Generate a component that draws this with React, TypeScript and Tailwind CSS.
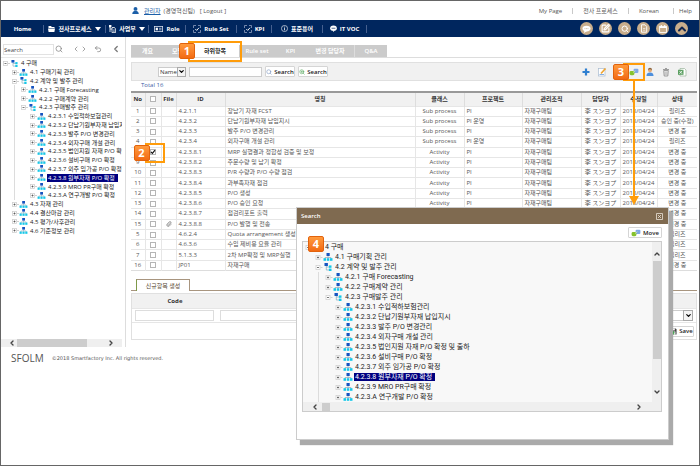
import React from "react";
import {
  ChevronDown,
  ChevronLeft,
  ChevronRight,
  ChevronUp,
  Paperclip,
  Search,
  SquarePen,
  Undo2,
  ZoomIn,
} from "lucide-react";

type Node = { level: number; label: string; kind: "org" | "open"; selected?: boolean };

const processTree: Node[] = [
  { level: 0, label: "4 구매", kind: "open" },
  { level: 1, label: "4.1 구매기획 관리", kind: "org" },
  { level: 1, label: "4.2 계약 및 발주 관리", kind: "open" },
  { level: 2, label: "4.2.1 구매 Forecasting", kind: "org" },
  { level: 2, label: "4.2.2 구매계약 관리", kind: "org" },
  { level: 2, label: "4.2.3 구매발주 관리", kind: "open" },
  { level: 3, label: "4.2.3.1 수입적하보험관리", kind: "org" },
  { level: 3, label: "4.2.3.2 단납기원부자재 납입지시", kind: "org" },
  { level: 3, label: "4.2.3.3 발주 P/O 변경관리", kind: "org" },
  { level: 3, label: "4.2.3.4 외자구매 개설 관리", kind: "org" },
  { level: 3, label: "4.2.3.5 법인지원 자재 P/O 확정 및 출하", kind: "org" },
  { level: 3, label: "4.2.3.6 설비구매 P/O 확정", kind: "org" },
  { level: 3, label: "4.2.3.7 외주 임가공 P/O 확정", kind: "org" },
  { level: 3, label: "4.2.3.8 원부자재 P/O 확정", kind: "org", selected: true },
  { level: 3, label: "4.2.3.9 MRO PR구매 확정", kind: "org" },
  { level: 3, label: "4.2.3.A 연구개발 P/O 확정", kind: "org" },
];

const sidebarTree: Node[] = [
  ...processTree,
  { level: 1, label: "4.3 자재 관리", kind: "org" },
  { level: 1, label: "4.4 결산마감 관리", kind: "org" },
  { level: 1, label: "4.5 평가/사후관리", kind: "org" },
  { level: 1, label: "4.6 기준정보 관리", kind: "org" },
];

const rows = [
  ["1", "4.2.1.1", "장납기 자재 FCST", "Sub process", "PI", "릴리즈"],
  ["2", "4.2.3.2", "단납기원부자재 납입지시", "Sub process", "PI 운영", "승인 중(수정)"],
  ["3", "4.2.3.3", "발주 P/O 변경관리", "Sub process", "PI", "변경 중"],
  ["4", "4.2.3.4", "외자구매 개설 관리", "Sub process", "PI 운영", "릴리즈"],
  ["8", "4.2.3.8.1", "MRP 실행결과 정합성 검증 및 보정", "Activity", "PI", "변경 중"],
  ["9", "4.2.3.8.2", "주문수량 및 납기 확정", "Activity", "PI", "변경 중"],
  ["10", "4.2.3.8.3", "P/R 수량과 P/O 수량 점검", "Activity", "PI", "변경 중"],
  ["11", "4.2.3.8.4", "과부족자재 점검", "Activity", "PI", "변경 중"],
  ["12", "4.2.3.8.5", "P/O 생성", "Activity", "PI", "변경 중"],
  ["13", "4.2.3.8.6", "P/O 승인 요청", "Activity", "PI", "변경 중"],
  ["14", "4.2.3.8.7", "점검리포트 출력", "Activity", "PI", "변경 중"],
  ["15", "4.2.3.8.8", "P/O 발행 및 전송", "Activity", "PI", "변경 중"],
  ["5", "4.6.2.4", "Quota arrangement 생성", "Activity", "PI", "릴리즈"],
  ["6", "4.6.3.6", "수입 제비용 요율 관리", "Activity", "PI", "릴리즈"],
  ["7", "5.1.3.3", "2차 MP확정 및 MRP실행", "Activity", "PI", "릴리즈"],
  ["16", "JP01", "자재구매", "Activity", "PI", "변경 중"],
];

function OrgIcon({ kind, className }: { kind: Node["kind"]; className: string }) {
  return kind === "org" ? (
    <svg viewBox="0 0 9 8" className={className}>
      <path d="M4.5 3v2M1.5 6V4.5h6V6" stroke="#9aa7b5" strokeWidth=".7" fill="none" />
      <rect x="3" y="0" width="3.2" height="3" fill="#1553c0" />
      <rect x="0" y="5.2" width="2.5" height="2.6" fill="#16c8e8" />
      <rect x="3.3" y="5.2" width="2.5" height="2.6" fill="#16c8e8" />
      <rect x="6.5" y="5.2" width="2.5" height="2.6" fill="#16c8e8" />
    </svg>
  ) : (
    <svg viewBox="0 0 9 8" className={className}>
      <path d="M2.8 3v4H6M2.8 4H6" stroke="#7fa8bd" strokeWidth=".7" fill="none" />
      <rect x="1" y="0" width="3.4" height="3" fill="#1553c0" />
      <rect x="5.4" y="2.4" width="2.6" height="2.4" fill="#16c8e8" />
      <rect x="5.4" y="5.6" width="2.6" height="2.4" fill="#16c8e8" />
    </svg>
  );
}

function Expander({ open }: { open: boolean }) {
  return (
    <svg viewBox="0 0 9 9" className="h-full w-full">
      <path d="M7 4.5h2" stroke="#d0d0d0" />
      <rect x="2.5" y="2.500" width="4" height="4" fill="#fff" stroke="#d0d0d0" strokeWidth=".8" />
      <path d={open ? "M3.500 4.500h2" : "M3.500 4.500h2M4.500 3.500v2"} stroke="#555" strokeWidth=".8" />
    </svg>
  );
}

function TreeRow({ node, large }: { node: Node; large?: boolean }) {
  const step = large ? "w-[10px]" : "w-[9px]";
  const cells = Array.from({ length: node.level }, (_, i) => i);
  return (
    <li className="flex items-center whitespace-nowrap">
      {cells.map((i) => (
        <span key={i} className={`flex h-full shrink-0 justify-center ${step}`}>
          {i === 1 && <span className="h-full w-px bg-[#dcdcdc]" />}
        </span>
      ))}
      <span className={`flex h-[9px] shrink-0 ${step}`}>
        <Expander open={node.kind === "open"} />
      </span>
      <OrgIcon kind={node.kind} className={large ? "h-2 w-[10px] shrink-0" : "h-[7px] w-[9px] shrink-0"} />
      <a
        href="#"
        className={`ml-px px-px ${node.selected ? "bg-[#000080] pr-[3px] text-white" : "text-[#222]"}`}
      >
        {node.label}
      </a>
    </li>
  );
}

function Badge({ n, className }: { n: number; className: string }) {
  return (
    <span
      className={`absolute z-20 flex h-4 w-4 items-center justify-center rounded-[2px] border border-[#e2620c] bg-linear-to-b from-[#ff9a3c] to-[#f26a10] font-['Open_Sans',sans-serif] text-[11px] leading-[14px] font-bold text-white ${className}`}
    >
      {n}
    </span>
  );
}

function Tick({ label, checked }: { label: string; checked?: boolean }) {
  return (
    <span className="mx-auto grid h-[6px] w-[6px]">
      <input
        type="checkbox"
        aria-label={label}
        defaultChecked={checked}
        className="peer col-start-1 row-start-1 h-[6px] w-[6px] appearance-none border border-[#b5b5b5] bg-white"
      />
      <svg
        viewBox="0 0 6 6"
        className="pointer-events-none invisible col-start-1 row-start-1 h-[6px] w-[6px] peer-checked:visible"
      >
        <path d="M1 2.8l1.4 1.6L5 1.2" stroke="#111" strokeWidth="1.2" fill="none" />
      </svg>
    </span>
  );
}

function MoveIcon({ className }: { className: string }) {
  return (
    <svg viewBox="0 0 10 8" className={className}>
      <rect x="4.6" y=".8" width="4.8" height="4.2" rx="1" fill="#7fa8e6" />
      <rect x=".6" y="3" width="4.8" height="4.2" rx="1.4" fill="#86c22e" />
      <path d="M4 4.5l2.4-1.8" stroke="#d9efb0" strokeWidth=".8" />
    </svg>
  );
}

const dot = "w-px self-center h-[6px] bg-[#c9c9c9]";
const navItem = "flex h-[8px] items-center justify-center gap-[3px] border-r border-[#46608f]";
const circle = "flex h-[13px] w-[13px] items-center justify-center rounded-full bg-[#c9ae8c] text-white";
const smallButton =
  "flex h-[11px] items-center justify-center gap-[2px] rounded-[1px] border border-[#d5d5d5] bg-white font-semibold text-[#222]";

function TickBoxIcon() {
  return (
    <svg viewBox="0 0 8 8" className="h-2 w-2">
      <path d="M.5 3V.5H3M5 .5h2.5V3M7.500 5v2.500H5M3 7.500H.5V5" stroke="#8fa0c0" strokeWidth=".8" fill="none" />
      <path d="M2.300 4l1.400 1.400L6 2.800" stroke="#fff" strokeWidth=".9" fill="none" />
    </svg>
  );
}

function DownTriangle() {
  return (
    <svg viewBox="0 0 6 4" className="h-1 w-[6px]">
      <path d="M0 0h6L3 4z" fill="#fff" />
    </svg>
  );
}

export default function App() {
  return (
    <div className="relative min-h-screen overflow-hidden border border-[#666] bg-white font-['Open_Sans','Noto_Sans_CJK_KR','Noto_Sans_CJK_JP',sans-serif] text-[6px] leading-[8px] text-[#555]">
      <header>
        <div className="flex h-[19px] items-center justify-between pr-[7px] pl-[131px]">
          <p className="flex items-center gap-[3px]">
            <svg viewBox="0 0 8 8" className="mr-[2px] h-[7px] w-[7px]">
              <circle cx="4" cy="2.200" r="2.200" fill="#1c5fa8" />
              <path d="M.3 8c0-3 2-3.500 3.700-3.500S7.700 5 7.700 8z" fill="#1c5fa8" />
            </svg>
            <a href="#" className="text-[#1c5fa8] underline">관리자</a>
            <span>(경영혁신팀)</span>
            <a href="#" className="ml-[2px]">[ Logout ]</a>
          </p>
          <nav className="flex gap-[10px]">
            <a href="#">My Page</a>
            <span className={dot} />
            <a href="#">전사 프로세스</a>
            <span className={dot} />
            <a href="#">Korean</a>
            <span className="flex gap-[5px] pl-1">
              <span className={dot} />
              <a href="#">Help</a>
            </span>
          </nav>
        </div>
        <div className="flex h-[17px] items-center justify-between bg-[#00265e] pr-[11px] font-bold text-white">
          <nav className="flex pl-px whitespace-nowrap">
            <a href="#" className={`${navItem} w-[42px]`}>Home</a>
            <a href="#" className={`${navItem} w-[62px]`}>
              <svg viewBox="0 0 7 6" className="h-[6px] w-[7px]">
                <path d="M.5 0h2.500l.8 1H6.500v1H.5zM0 2.500h7L6.400 6H.6z" fill="#fff" />
              </svg>
              전사프로세스
              <DownTriangle />
            </a>
            <a href="#" className={`${navItem} w-[43px]`}>
              <svg viewBox="0 0 7 8" className="h-2 w-[7px]">
                <path d="M0 0h2v2H0zM1 2v5M1 4h2" fill="#fff" stroke="#fff" strokeWidth=".8" />
                <path d="M3 2.500h2.500L6.600 4v3.600H3z" fill="none" stroke="#fff" strokeWidth=".8" />
                <path d="M4 5h1.800M4 6.300h1.800" stroke="#fff" strokeWidth=".6" />
              </svg>
              사업부
              <DownTriangle />
            </a>
            <a href="#" className={`${navItem} w-[37px]`}>
              <svg viewBox="0 0 9 6" className="h-[6px] w-[9px]">
                <rect x=".4" y=".4" width="8.200" height="5.200" fill="none" stroke="#d4dcea" strokeWidth=".8" />
                <rect x="1.700" y="1.700" width="2.200" height="2.600" fill="#fff" />
                <path d="M5 2.300h2.500M5 3.800h2.500" stroke="#fff" strokeWidth=".6" />
              </svg>
              Role
            </a>
            <a href="#" className={`${navItem} w-[51px]`}>
              <TickBoxIcon />
              Rule Set
            </a>
            <a href="#" className={`${navItem} w-[35px]`}>
              <TickBoxIcon />
              KPI
            </a>
            <a href="#" className={`${navItem} w-[51px]`}>
              <svg viewBox="0 0 8 8" className="h-[7px] w-[7px]">
                <circle cx="4" cy="4" r="3.500" fill="none" stroke="#fff" strokeWidth=".7" />
                <path d="M4 1.900v1M4 3.500v2.600" stroke="#fff" strokeWidth=".9" />
              </svg>
              표준용어
            </a>
            <a href="#" className={`${navItem} w-[44px]`}>
              <svg viewBox="0 0 8 8" className="h-[7px] w-[7px]">
                <ellipse cx="4" cy="3.700" rx="3.800" ry="3" fill="#fff" />
                <path d="M3 6l1 2 1.500-2z" fill="#fff" />
                <path d="M1.800 3.700h4.400" stroke="#00265e" strokeWidth=".8" />
              </svg>
              IT VOC
            </a>
          </nav>
          <div className="flex gap-[6px]">
            <button aria-label="Messages" className={circle}>
              <svg viewBox="0 0 9 8" className="h-2 w-[9px]">
                <ellipse cx="4.500" cy="3.600" rx="4" ry="2.800" fill="#fff" />
                <path d="M2.500 5.500L2 8l3-2z" fill="#fff" />
                <path d="M2.500 3.600h4" stroke="#c9ae8c" strokeWidth=".8" strokeDasharray=".9 .6" />
              </svg>
            </button>
            <button aria-label="Write" className={circle}><SquarePen size={9} strokeWidth={3} /></button>
            <button aria-label="Find" className={circle}><Search size={8} strokeWidth={3} /></button>
            <button aria-label="Documents" className={circle}>
              <svg viewBox="0 0 8 9" className="h-[9px] w-2">
                <path d="M1.500.800h3.500l1.700 1.700v5.700H1.500z" fill="none" stroke="#fff" strokeWidth=".9" />
                <path d="M3 4.500h2.300M3 6.200h2.300" stroke="#fff" strokeWidth=".6" />
              </svg>
            </button>
            <button aria-label="Calendar" className={circle}>
              <svg viewBox="0 0 8 8" className="h-2 w-2">
                <rect x=".6" y="1.400" width="6.800" height="6" fill="none" stroke="#fff" strokeWidth=".9" />
                <path d="M.5 2.400h7M2.300 0v2M5.700 0v2" stroke="#fff" strokeWidth="1.100" />
              </svg>
            </button>
            <button aria-label="Collapse" className={circle}><ChevronUp size={12} strokeWidth={4} color="#12264f" /></button>
          </div>
        </div>
      </header>

      <div className="flex">
        <aside className="flex w-[125px] shrink-0 flex-col border-r border-[#ddd]">
          <form className="mt-[7px] flex h-[14px] items-start gap-[7px] border-b border-[#e8e8e8] pl-[2px] text-[#777]">
            <input
              aria-label="Search"
              placeholder="Search"
              className="h-[11px] w-[51px] border border-[#e2e2e2] placeholder:text-[#444]"
            />
            <Search size={8} className="-ml-[6px] mt-px" />
            <span className="mt-px ml-[3px] flex gap-[2px]">
              <ChevronLeft size={8} className="-mx-px" />
              <ChevronRight size={8} className="-mx-px" />
            </span>
            <Undo2 size={8} className="mt-px" />
            <ChevronLeft size={10} strokeWidth={3} className="ml-[2px]" />
          </form>
          <ul className="mt-px grid h-[176px] w-[121px] auto-rows-fr overflow-hidden">
            {sidebarTree.map((n) => (
              <TreeRow key={n.label} node={n} />
            ))}
          </ul>
          <div className="mt-auto flex h-2 w-[121px] items-center bg-[#efefef] pr-[7px] pl-[7px] text-[#444]">
            <ChevronLeft size={8} strokeWidth={4} />
            <span className="ml-px h-2 w-[70px] bg-[#cdcdcd]" />
            <ChevronRight size={8} strokeWidth={4} className="ml-auto" />
          </div>
        </aside>

        <main className="min-w-0 flex-1 pt-2 pr-[2px] pb-[7px] pl-[5px]">
          <nav className="flex border-b border-[#ddd] font-semibold whitespace-nowrap text-white">
            {[
              ["개요", "w-[33px]"],
              ["모델", "w-[27px]"],
            ].map(([t, w]) => (
              <a key={t} href="#" className={`flex h-3 items-center justify-center bg-[#cbcbcb] ${w}`}>{t}</a>
            ))}
            <a href="#" className="relative flex h-3 w-[48px] items-center justify-center font-bold text-[#222]">
              하위항목
              <span className="absolute -inset-x-[3px] -top-[4px] h-[21px] border-2 border-[#ff9c0a]" />
              <Badge n={1} className="-top-[2px] -left-[12px]" />
            </a>
            {[
              ["Rule set", "w-[36px]"],
              ["KPI", "w-[31px]"],
              ["변경 담당자", "w-[49px] border-r border-[#ddd]"],
              ["Q&A", "w-[32px]"],
            ].map(([t, w]) => (
              <a key={t} href="#" className={`flex h-3 items-center justify-center bg-[#cbcbcb] ${w}`}>{t}</a>
            ))}
          </nav>

          <div className="mt-1 flex h-[19px] items-center justify-between border border-[#e0e0e0] bg-[#f1f1f1] pr-[9px] pl-[26px]">
            <form className="flex items-center gap-[3px]">
              <span className="grid h-[10px] w-[28px]">
                <select
                  aria-label="Search field"
                  className="col-start-1 row-start-1 h-[10px] w-[28px] appearance-none border border-[#ccc] bg-white pl-px text-[#333]"
                >
                  <option>Name</option>
                </select>
                <span className="pointer-events-none col-start-1 row-start-1 ml-auto flex w-[9px] items-center justify-center border border-[#aaa] bg-[#f4f4f4] text-black">
                  <ChevronDown size={7} strokeWidth={4} />
                </span>
              </span>
              <input aria-label="Search text" className="h-[10px] w-[73px] border border-[#ccc] bg-white" />
              <button type="button" className={`${smallButton} w-[30px]`}>
                <Search size={6} color="#6785b5" className="shrink-0" />
                Search
              </button>
              <button type="button" className={`${smallButton} w-[30px]`}>
                <ZoomIn size={6} color="#3f9a47" className="shrink-0" />
                Search
              </button>
            </form>
            <div className="flex items-center gap-[6px]">
              <button aria-label="Add">
                <svg viewBox="0 0 10 10" className="h-[10px] w-[10px]">
                  <path d="M5 1.500v7M1.500 5h7" stroke="#2f7fd0" strokeWidth="2.200" />
                </svg>
              </button>
              <button aria-label="Edit">
                <svg viewBox="0 0 10 10" className="h-[10px] w-[10px]">
                  <rect x="1.500" y="1.500" width="6.500" height="7.500" fill="#fff" stroke="#a9bbd0" strokeWidth=".7" />
                  <path d="M2.500 7.500h4.500" stroke="#78a6dd" strokeWidth=".9" />
                  <path d="M4 6.500l4.500-5" stroke="#efa532" strokeWidth="1.700" />
                </svg>
              </button>
              <button aria-label="Move" className="relative ml-4">
                <MoveIcon className="h-2 w-[10px]" />
                <span className="absolute -top-[5px] -left-[6px] h-[18px] w-[22px] border-2 border-[#ff9c0a]" />
                <Badge n={3} className="-top-[4px] -left-[16px]" />
                <svg viewBox="0 0 10 124" className="absolute top-[13px] left-0 z-20 h-[124px] w-[10px] max-w-none">
                  <path d="M5 0v117" stroke="#ff9c0a" strokeWidth="2" />
                  <path d="M0 115h10l-5 9z" fill="#ff9c0a" />
                </svg>
              </button>
              <button aria-label="Owner">
                <svg viewBox="0 0 10 10" className="h-[10px] w-[10px]">
                  <path d="M1.500 9c0-3 2-3.500 3.500-3.500S8.500 6 8.500 9z" fill="#4e8fdc" />
                  <circle cx="5" cy="3.300" r="2" fill="#e2ab7a" />
                  <path d="M3 3c0-3 4-3 4 0-1.500-1-2.500-1-4 0z" fill="#8a6440" />
                </svg>
              </button>
              <button aria-label="Delete">
                <svg viewBox="0 0 10 10" className="h-[10px] w-[10px]">
                  <path d="M2 2.500h6M4 1.500h2M2.700 3.500l.5 5.500h3.600l.5-5.500z" fill="#ececec" stroke="#888" strokeWidth=".8" />
                  <path d="M4.200 4.500v3.500M5.800 4.500v3.500" stroke="#999" strokeWidth=".6" />
                </svg>
              </button>
              <button aria-label="Export to Excel">
                <svg viewBox="0 0 10 10" className="h-[10px] w-[10px]">
                  <path d="M3 1.500h4.500L9 3v6H3z" fill="#fff" stroke="#8aa78c" strokeWidth=".6" />
                  <rect x="1" y="2.800" width="5.500" height="5" fill="#5a9f60" />
                  <path d="M2.400 3.900l2.700 2.900M5.100 3.900L2.400 6.800" stroke="#fff" strokeWidth=".8" />
                </svg>
              </button>
            </div>
          </div>

          <p className="h-[10px] pl-[10px] text-[#3b5ba5]">Total 16</p>

          <table className="h-[180px] w-full table-fixed border-collapse border-t-2 border-b border-t-[#999] border-b-[#ddd] leading-[7px] whitespace-nowrap">
            <colgroup>
              <col className="w-[14px]" />
              <col className="w-[16px]" />
              <col className="w-[15px]" />
              <col className="w-[49px]" />
              <col />
              <col className="w-[49px]" />
              <col className="w-[58px]" />
              <col className="w-[59px]" />
              <col className="w-[39px]" />
              <col className="w-[37px]" />
              <col className="w-[40px]" />
            </colgroup>
            <thead>
              <tr className="h-[14px] bg-[#f1f1f1] text-[#333] *:border-r *:border-[#ddd] *:p-0 *:last:border-r-0">
                <th>No</th>
                <th><Tick label="Select all" /></th>
                <th>File</th>
                <th>ID</th>
                <th>명칭</th>
                <th>클래스</th>
                <th>프로젝트</th>
                <th>관리조직</th>
                <th>담당자</th>
                <th>수정일</th>
                <th>상태</th>
              </tr>
            </thead>
            <tbody>
              {rows.map(([no, id, name, cls, project, state]) => (
                <tr key={id} className="border-t border-[#e6e6e6] *:border-r *:border-[#e6e6e6] *:p-0 *:last:border-r-0">
                  <td className="text-center">{no}</td>
                  <td className="relative">
                    <Tick label={`Select ${id}`} checked={no === "8"} />
                    {no === "8" && (
                      <>
                        <span className="absolute -top-[5px] -left-px z-10 h-5 w-5 border-2 border-[#ff9c0a]" />
                        <Badge n={2} className="-top-[3px] -left-[12px]" />
                      </>
                    )}
                  </td>
                  <td>{no === "15" && <Paperclip size={6} className="mx-auto" />}</td>
                  <td><span className="pl-[2px]">{id}</span></td>
                  <td><span className="pl-[2px]">{name}</span></td>
                  <td className="text-center">{cls}</td>
                  <td><span className="pl-[2px]">{project}</span></td>
                  <td><span className="pl-[2px]">자재구매팀</span></td>
                  <td className="text-center">李 スンヨプ</td>
                  <td className="text-center">2018/04/24</td>
                  <td className="text-center">{state}</td>
                </tr>
              ))}
            </tbody>
          </table>

          <div className="mt-2 flex border-b border-[#a8957f] pl-[5px]">
            <a
              href="#"
              className="-mb-px flex h-3 w-[54px] items-center justify-center border border-b-0 border-[#a8957f] border-l-[#7f9a4a] bg-white text-[#5a4a35]"
            >
              신규항목 생성
            </a>
          </div>
          <form className="mt-[2px] border border-[#e0e0e0]">
            <div className="flex h-[14px] items-center bg-[#f1f1f1]">
              <label htmlFor="code" className="w-[86px] text-center font-bold text-[#333]">Code</label>
            </div>
            <div className="flex h-[15px] items-center gap-[6px] border-y border-[#e6e6e6] px-[3px]">
              <input id="code" className="h-[11px] w-[79px] border border-[#ddd]" />
              <input aria-label="Item name" className="h-[11px] flex-1 border border-[#ddd]" />
              <span className="grid h-[11px] w-[60px]">
                <select
                  aria-label="Item class"
                  className="col-start-1 row-start-1 h-[11px] w-[60px] appearance-none border border-[#ccc] bg-white"
                />
                <span className="pointer-events-none col-start-1 row-start-1 ml-auto flex w-[10px] items-center justify-center border border-[#aaa] bg-[#f4f4f4] text-black">
                  <ChevronDown size={7} strokeWidth={4} />
                </span>
              </span>
            </div>
            <div className="flex h-4 items-center justify-end pr-[2px]">
              <button type="button" className={`${smallButton} w-[25px]`}>
                <svg viewBox="0 0 8 8" className="h-[7px] w-[7px] shrink-0">
                  <path d="M.5.500h6l1 1v6h-7z" fill="#444" />
                  <rect x="2" y=".5" width="3.500" height="2.200" fill="#fff" />
                  <rect x="1.800" y="4" width="4.400" height="3.500" fill="#fff" />
                  <path d="M4 3.500v4M2.500 5.500h3" stroke="#2f9b3c" />
                </svg>
                Save
              </button>
            </div>
          </form>
        </main>
      </div>

      <footer className="flex items-center gap-2 pt-1 pl-[10px]">
        <strong className="text-[10px] leading-[14px] font-normal">SFOLM</strong>
        <small className="font-['DejaVu_Sans',sans-serif] text-[5px]">©2018 Smartfactory Inc. All rights reserved.</small>
      </footer>

      <section
        role="dialog"
        aria-label="Search"
        className="absolute top-[206px] right-[30px] z-10 w-[373px] border border-[#ccc] bg-white pb-[27px] shadow-[4px_5px_1px_#aaa]"
      >
        <div className="flex h-4 items-center justify-between bg-[#7f6a50] pr-[5px] pl-1 font-semibold text-white">
          <h2>Search</h2>
          <button aria-label="Close">
            <svg viewBox="0 0 7 7" className="h-[7px] w-[7px]">
              <path d="M.5.500h6v6h-6zM2 2l3 3M5 2L2 5" fill="none" stroke="#e9e2d8" strokeWidth=".8" />
            </svg>
          </button>
        </div>
        <div className="flex justify-end py-[3px] pr-[6px]">
          <button className={`${smallButton} w-[34px]`}>
            <MoveIcon className="h-2 w-[10px]" />
            Move
          </button>
        </div>
        <div className="relative mr-[6px] ml-[5px] grid grid-cols-[1fr_9px] border border-[#ccc] bg-[#f8f8f8]">
          <Badge n={4} className="-top-[6px] left-[5px]" />
          <ul className="grid auto-rows-[10px] font-[Roboto,'Noto_Sans_CJK_KR',sans-serif] text-[7px]">
            {processTree.map((n) => (
              <TreeRow key={n.label} node={n} large />
            ))}
          </ul>
          <div className="flex flex-col items-center bg-[#efefef] pt-2 pb-[6px] text-[#444]">
            <ChevronUp size={8} strokeWidth={4} />
            <span className="mt-[3px] h-[98px] w-2 bg-[#cdcdcd]" />
            <ChevronDown size={8} strokeWidth={4} className="mt-auto" />
          </div>
          <div className="col-span-2 flex h-[9px] items-center bg-[#efefef] pr-[18px] pl-2 text-[#444]">
            <ChevronLeft size={8} strokeWidth={4} />
            <span className="ml-[3px] h-2 w-2 bg-[#cdcdcd]" />
            <ChevronRight size={8} strokeWidth={4} className="ml-auto" />
          </div>
        </div>
      </section>
    </div>
  );
}
